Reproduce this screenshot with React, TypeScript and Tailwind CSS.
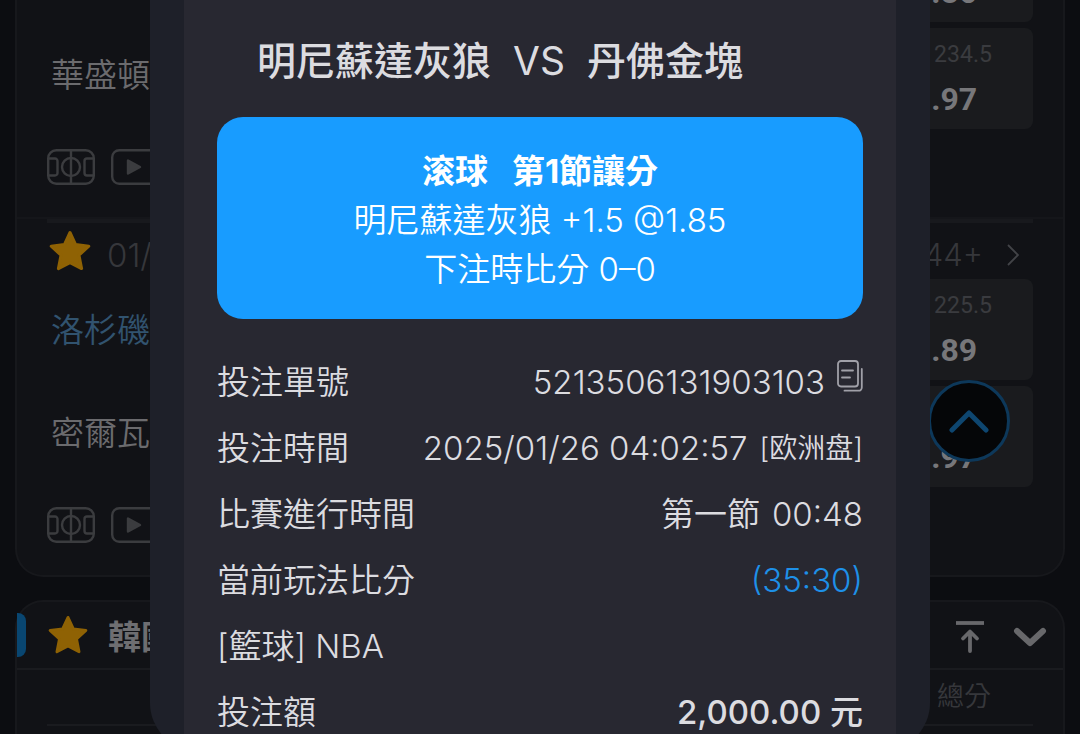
import React from 'react';

interface Odds {
    side: string;
    line: string;
    price: string;
}

interface Match {
    date?: string;
    more?: string;
    teams: { name: string; leading?: boolean; odds: Odds }[];
}

interface Detail {
    label: string;
    value?: React.ReactNode;
}

const matches: Match[] = [
    {
        teams: [
            { name: '', odds: { side: '大', line: '234.5', price: '1.86' } },
            { name: '華盛頓', odds: { side: '小', line: '234.5', price: '1.97' } },
        ],
    },
    {
        date: '01/26',
        more: '144+',
        teams: [
            { name: '洛杉磯', leading: true, odds: { side: '大', line: '225.5', price: '1.89' } },
            { name: '密爾瓦', odds: { side: '小', line: '225.5', price: '1.97' } },
        ],
    },
];

const StarIcon = ({ className }: { className: string }) => (
    <svg viewBox="0 0 42 42" className={className} fill="#8f6204" stroke="#8f6204" strokeWidth="3" strokeLinejoin="round">
        <path d="M21 2.5 L26.6 14.6 L39.8 16.2 L30 25.2 L32.6 38.6 L21 32.6 L9.4 38.6 L12 25.2 L2.2 16.2 L15.4 14.6 Z" />
    </svg>
);

const CourtIcon = () => (
    <svg viewBox="0 0 48 36" className="h-9 w-12" fill="none" stroke="#3b3c3f" strokeWidth="2.4">
        <rect x="1.2" y="1.2" width="45.6" height="33.6" rx="8" />
        <path d="M24 1v34M1 9.5h7a2.5 2.5 0 0 1 2.5 2.5v12a2.5 2.5 0 0 1-2.5 2.5H1M47 9.5h-7a2.5 2.5 0 0 0-2.5 2.5v12a2.5 2.5 0 0 0 2.5 2.5h7" />
        <circle cx="24" cy="18" r="9" />
    </svg>
);

const PlayIcon = () => (
    <svg viewBox="0 0 48 36" className="h-9 w-12" fill="none" stroke="#3b3c3f" strokeWidth="2.4">
        <rect x="1.2" y="1.2" width="45.6" height="33.6" rx="7" />
        <path d="M17 11.5v13L29 18z" fill="#3b3c3f" strokeLinejoin="round" />
    </svg>
);

const CopyIcon = () => (
    <svg viewBox="0 0 26 32" className="h-8 w-[26px]" fill="none" stroke="#a0a0a8" strokeWidth="1.8" strokeLinecap="round">
        <rect x="1" y="1" width="20" height="25.5" rx="3" />
        <path d="M5 10.5h11M5 17.5h8M24.8 9v18.5a3.2 3.2 0 0 1-3.2 3.2H7.5" />
    </svg>
);

const OddsButton = ({ side, line, price }: Odds) => (
    <button className="flex h-[101px] w-44 flex-col items-center rounded-lg bg-[#1a1b1e] pt-[11px] font-['Roboto','Noto_Sans_CJK_TC',sans-serif]">
        <span className="flex gap-2 text-[23px] leading-8 text-[#3a3b3f]">
            <span className="text-[28px]">{side}</span>
            <span>{line}</span>
        </span>
        <span className="mt-2 text-[32px] leading-10 font-bold text-[#77777a]">{price}</span>
    </button>
);

const MatchRow = ({ match }: { match: Match }) => (
    <section className="border-t-2 border-[#15161a]">
        <div className="mx-[30px] h-1 bg-[#18191d]" />
        <header className="flex h-14 items-center justify-between pr-11 pl-8">
            {match.date && (
                <div className="flex items-center gap-4">
                    <StarIcon className="h-[42px] w-[42px]" />
                    <span className="mt-2 text-[33px] leading-10 font-light text-[#36373b]">{match.date}</span>
                </div>
            )}
            {match.more && (
                <a href="#more" className="mt-2 flex items-center gap-6 text-[31px] leading-10 font-light text-[#36373b]">
                    {match.more}
                    <svg viewBox="0 0 12 22" className="h-[22px] w-3" fill="none" stroke="#424347" strokeWidth="1.8">
                        <path d="M1 1l10 10L1 21" />
                    </svg>
                </a>
            )}
        </header>
        <div className="flex items-start justify-between pr-[30px] pl-[34px]">
            <div className="text-[33px] leading-[103px] font-[350] text-[#6b6b6e]">
                {match.teams.map((team, i) => (
                    <p key={i} className={team.leading ? 'h-[103px] text-[#31536f]' : 'h-[103px]'}>
                        {team.name}
                    </p>
                ))}
            </div>
            <div className="flex flex-col gap-1.5">
                {match.teams.map((team, i) => (
                    <OddsButton key={i} {...team.odds} />
                ))}
            </div>
        </div>
        <div className="flex gap-4 px-[30px] pt-5 pb-8">
            <CourtIcon />
            <PlayIcon />
        </div>
    </section>
);

const LeagueCard = () => (
    <div className="mt-[23px] rounded-t-[28px] border-2 border-b-0 border-[#17181c] bg-[#111216]">
        <div className="flex h-[68px] items-center justify-between border-b-2 border-[#1a1b1f] pr-4">
            <div className="flex items-center">
                <span className="h-11 w-[9px] rounded-r-lg bg-[#094671]" />
                <StarIcon className="ml-[22px] h-10 w-10" />
                <span className="mt-1 ml-5 text-[33px] leading-10 font-bold text-[#6e6e71]">韓國</span>
            </div>
            <div className="mt-1 flex items-center gap-7 text-[#68686b]">
                <button aria-label="置頂">
                    <svg viewBox="0 0 30 32" className="h-8 w-[30px]" fill="none" stroke="currentColor" strokeWidth="3.8" strokeLinecap="round" strokeLinejoin="round">
                        <path d="M1 2h28" strokeLinecap="butt" />
                        <path d="M15 30V11M8 17.5L15 10.500L22 17.500" />
                    </svg>
                </button>
                <button aria-label="收合">
                    <svg viewBox="0 0 34 20" className="h-5 w-[34px]" fill="none" stroke="currentColor" strokeWidth="6" strokeLinecap="round" strokeLinejoin="round">
                        <path d="M4 4l13 12L30 4" />
                    </svg>
                </button>
            </div>
        </div>
        <div className="mx-[30px] flex h-14 items-center justify-end border-b-2 border-[#1a1b1f] pr-[42px]">
            <span className="text-[27px] leading-8 font-[350] text-[#36373b]">總分</span>
        </div>
        <div className="h-16" />
    </div>
);

const details: Detail[] = [
    {
        label: '投注單號',
        value: (
            <>
                5213506131903103
                <button aria-label="複製" className="mb-3 ml-3">
                    <CopyIcon />
                </button>
            </>
        ),
    },
    {
        label: '投注時間',
        value: (
            <>
                2025/01/26 04:02:57
                <span className="ml-3 text-[28px]">[欧洲盘]</span>
            </>
        ),
    },
    { label: '比賽進行時間', value: <>第一節<span className="ml-3">00:48</span></> },
    { label: '當前玩法比分', value: <span className="text-[#1e90e8]">(35:30)</span> },
    { label: '[籃球] NBA' },
    { label: '投注額', value: <span className="font-medium">2,000.00 元</span> },
];

const BetSlip = () => (
    <div className="rounded-b-[48px] bg-[#1e2029] px-[34px]">
        <div className="bg-[#282831] px-[33px] pb-1.5 text-[#dcdce0]">
            <h1 className="flex gap-[22px] pt-[33px] pb-7 pl-10 text-[39px] leading-[56px] font-medium whitespace-nowrap">
                <span>明尼蘇達灰狼</span>
                <span className="font-normal">VS</span>
                <span>丹佛金塊</span>
            </h1>
            <div className="rounded-[26px] bg-[#189cff] pt-[30px] pb-[25px] text-center text-[33px] leading-[49px] text-white">
                <p className="flex justify-center gap-6 font-bold">
                    <span>滚球</span>
                    <span>第1節讓分</span>
                </p>
                <p className="font-[350]">明尼蘇達灰狼 +1.5 @1.85</p>
                <p className="font-[350]">下注時比分 0–0</p>
            </div>
            <dl className="mt-[30px] text-[33px] leading-10 font-[350] whitespace-nowrap">
                {details.map((item) => (
                    <div key={item.label} className="flex h-[66px] items-center justify-between">
                        <dt>{item.label}</dt>
                        {item.value && <dd className="flex items-center">{item.value}</dd>}
                    </div>
                ))}
            </dl>
        </div>
    </div>
);

const App: React.FC = () => {
    return (
        <div className="relative h-screen overflow-hidden bg-[#0c0d11] font-['Inter','Noto_Sans_CJK_TC',sans-serif]">
            <main className="-mt-[141px] px-[15px]">
                <div className="rounded-b-[28px] border-x-2 border-b-2 border-[#17181c] bg-[#111216]">
                    {matches.map((match, i) => (
                        <MatchRow key={i} match={match} />
                    ))}
                </div>
                <LeagueCard />
            </main>

            <button
                aria-label="回到頂部"
                className="absolute top-[380px] right-[70px] flex h-[82px] w-[82px] items-center justify-center rounded-full border-3 border-[#0d385a] bg-[#050608]"
            >
                <svg viewBox="0 0 40 24" className="h-6 w-10" fill="none" stroke="#0e4670" strokeWidth="5" strokeLinecap="round" strokeLinejoin="round">
                    <path d="M3 21L20 4l17 17" />
                </svg>
            </button>

            <div className="absolute inset-x-0 top-0 px-[150px]" role="dialog">
                <BetSlip />
            </div>
        </div>
    );
};

export default App;
